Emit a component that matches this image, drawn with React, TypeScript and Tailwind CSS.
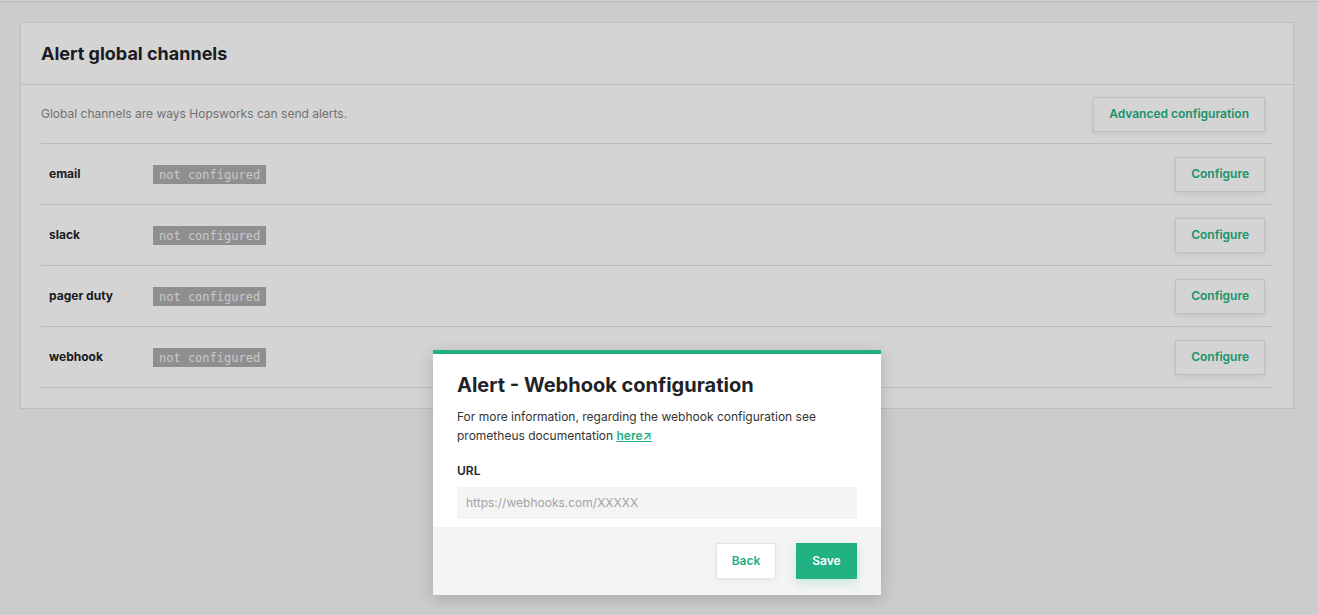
const channels = ["email", "slack", "pager duty", "webhook"];

function OutlineButton({ children }: { children: React.ReactNode }) {
  return (
    <button className="h-[35px] px-[15px] bg-white border border-[#e6e6e6] shadow-[0_2px_6px_rgba(0,0,0,0.08)] text-[12px] font-semibold text-[#21b182]">
      {children}
    </button>
  );
}

export default function App() {
  return (
    <div
      className="relative w-[1318px] h-[615px] overflow-hidden bg-[#f6f6f6] text-[#24292f]"
      style={{ fontFamily: "Inter, 'Noto Sans', sans-serif" }}
    >
      <div className="h-[2px] border-b border-[#e1e1e1] bg-[#fafafa]" />

      <div className="ml-[20px] mt-[20px] w-[1274px] bg-white border border-[#e4e4e4]">
        <div className="h-[62px] px-[20px] flex items-center border-b border-[#e4e4e4]">
          <h2 className="text-[18px] font-bold text-[#1f2328]">Alert global channels</h2>
        </div>

        <div className="px-[20px] pb-[20px]">
          <div className="h-[59px] flex items-center justify-between border-b border-[#e4e4e4] pr-[8px]">
            <span className="text-[12px] text-[#8a8a8a]">Global channels are ways Hopsworks can send alerts.</span>
            <OutlineButton>Advanced configuration</OutlineButton>
          </div>

          {channels.map((c) => (
            <div key={c} className="h-[61px] flex items-center border-b border-[#e4e4e4] px-[8px]">
              <span className="w-[104px] text-[12px] font-bold text-[#1f2328]">{c}</span>
              <span
                className="h-[19px] px-[6px] pt-[2px] flex items-center bg-[#acacac] text-[#f1f1f1] text-[12px]"
                style={{ fontFamily: "'DejaVu Sans Mono', monospace" }}
              >
                not configured
              </span>
              <div className="ml-auto">
                <OutlineButton>Configure</OutlineButton>
              </div>
            </div>
          ))}
        </div>
      </div>

      {/* overlay */}
      <div className="absolute inset-0 bg-black/[0.17]" />

      {/* modal */}
      <div className="absolute left-[433px] top-[350px] w-[448px] bg-white border-t-4 border-[#21b182] shadow-[0_4px_16px_rgba(0,0,0,0.18)]">
        <div className="px-[24px] pt-[17px] pb-[8px]">
          <h3 className="text-[20px] leading-[28px] font-bold text-[#1f2328]">Alert - Webhook configuration</h3>
          <p className="mt-[8px] text-[12px] leading-[19px] text-[#333]">
            For more information, regarding the webhook configuration see prometheus documentation{" "}
            <a className="font-semibold text-[#21b182] underline">here↗</a>
          </p>
          <div className="mt-[18px] text-[12px] leading-[16px] font-semibold text-[#1f2328]">URL</div>
          <div className="mt-[8px] h-[32px] bg-[#f4f4f4] flex items-center px-[9px] text-[12px] text-[#a3a3a3]">
            https://webhooks.com/XXXXX
          </div>
        </div>
        <div className="bg-[#f4f4f4] h-[68px] px-[24px] pb-[1px] flex items-center justify-end gap-[20px]">
          <button className="h-[36px] w-[60px] bg-white border border-[#e4e4e4] text-[12px] font-semibold text-[#21b182] shadow-[0_2px_6px_rgba(0,0,0,0.06)]">
            Back
          </button>
          <button className="h-[36px] w-[61px] bg-[#21b182] text-[12px] font-semibold text-white shadow-[0_4px_10px_rgba(33,177,130,0.2)]">
            Save
          </button>
        </div>
      </div>
    </div>
  );
}
